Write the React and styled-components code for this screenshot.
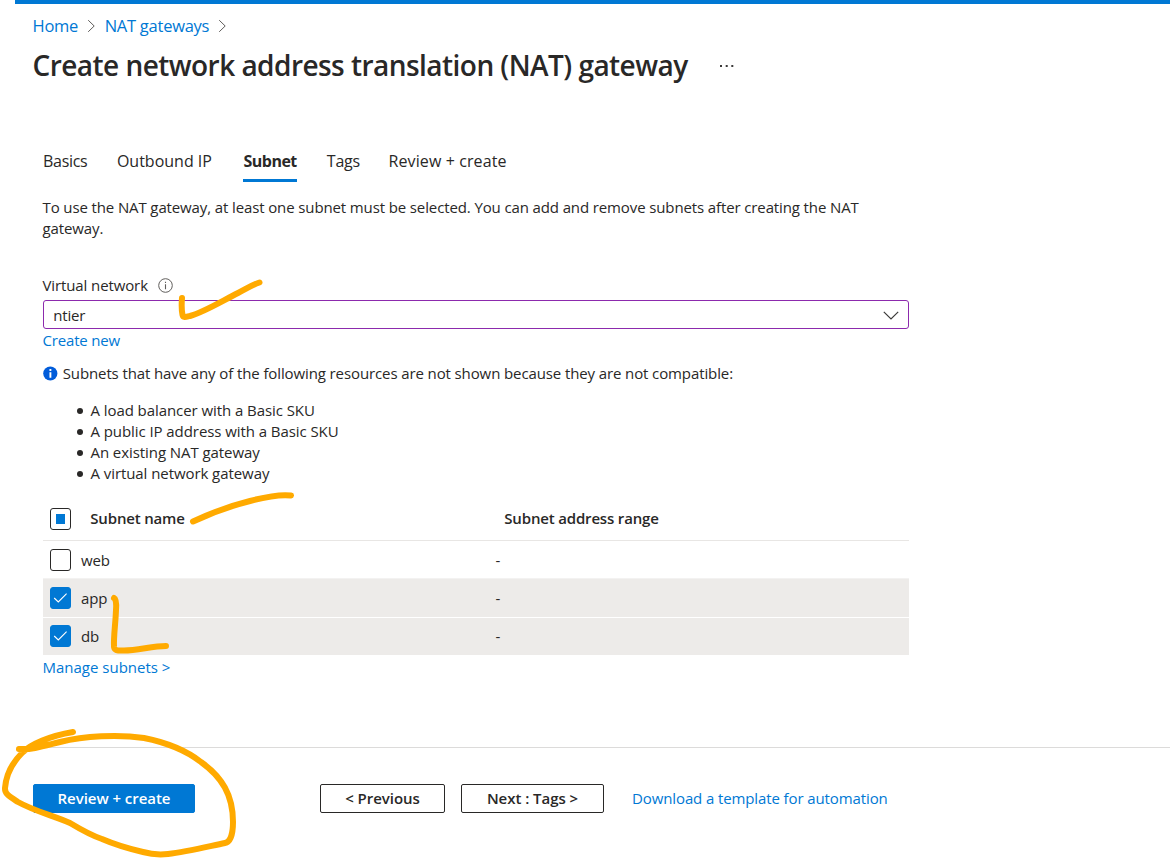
import React from "react";
import styled, { createGlobalStyle } from "styled-components";

const Global = createGlobalStyle`
  * { box-sizing: border-box; }
  body {
    margin: 0;
    background: #fff;
    color: #292827;
    font: 400 15px/21px "Open Sans", "Noto Sans", sans-serif;
    letter-spacing: -0.11px;
  }
`;

const Page = styled.div`
  position: relative;
  width: 1170px;
  height: 859px;
  overflow: hidden;
`;

const TopBar = styled.div`
  height: 4px;
  margin-left: 15px;
  background: #0078d4;
`;

const Header = styled.header`
  padding: 9px 0 0 32.5px;
`;

const Breadcrumb = styled.nav`
  display: flex;
  align-items: center;
  height: 24px;
  font-size: 16.5px;
  letter-spacing: -0.25px;
`;

const Link = styled.a`
  color: #0078d4;
  text-decoration: none;
  white-space: nowrap;
  letter-spacing: ${(p) => p.$spacing || "inherit"};
`;

const Separator = styled.svg`
  width: 9px;
  height: 14px;
  margin: 1px 8.5px 0 9px;
  fill: none;
  stroke: #605e5c;
`;

const TitleRow = styled.div`
  display: flex;
  align-items: center;
  height: 40px;
  margin-top: 8px;
`;

const Title = styled.h1`
  margin: 0;
  font-size: 28px;
  line-height: 40px;
  font-weight: 600;
  letter-spacing: -0.54px;
  white-space: nowrap;
`;

const MoreIcon = styled.svg`
  width: 14px;
  height: 4px;
  margin-left: 32px;
  margin-top: 1px;
  fill: #3b3a39;
`;

const Main = styled.main`
  width: 867px;
  margin: 65px 0 0 43px;
`;

const Tabs = styled.div`
  display: flex;
  height: 32px;
`;

const Tab = styled.div`
  height: 32px;
  margin-right: ${(p) => p.$after}px;
  border-bottom: 3px solid ${(p) => (p.$active ? "#0078d4" : "transparent")};
  font-size: 16px;
  line-height: 22px;
  font-weight: ${(p) => (p.$active ? 700 : 400)};
  letter-spacing: ${(p) => p.$spacing};
  white-space: nowrap;
`;

const Description = styled.p`
  margin: 15px 0 0 -0.5px;
  letter-spacing: -0.12px;
`;

const FieldLabel = styled.div`
  display: flex;
  align-items: center;
  gap: 10px;
  height: 21px;
  margin: 36px 0 0 -0.5px;
`;

const InfoIcon = styled.svg`
  width: 15px;
  height: 15px;
  flex: none;
`;

const Select = styled.div`
  display: flex;
  align-items: center;
  justify-content: space-between;
  width: 866px;
  height: 29px;
  margin-top: 4px;
  padding: 1px 9px 0 9.3px;
  border: 1px solid #8c2aad;
  border-radius: 3px;
  letter-spacing: -0.2px;
`;

const Chevron = styled.svg`
  width: 16px;
  height: 9px;
  fill: none;
  stroke: #3b3a39;
  stroke-width: 1.2;
`;

const LinkRow = styled.div`
  height: 21px;
  margin: ${(p) => p.$top}px 0 0 -0.5px;
`;

const Notice = styled.div`
  display: flex;
  align-items: center;
  gap: 5px;
  height: 21px;
  margin: 12px 0 0 -0.3px;
`;

const ResourceList = styled.ul`
  margin: 16px 0 0;
  padding: 0;
  list-style: none;
  letter-spacing: -0.07px;
`;

const Resource = styled.li`
  display: flex;
  align-items: center;
  padding-left: 34px;

  &::before {
    content: "";
    width: 6px;
    height: 6px;
    margin: 1px 7.5px 0 0;
    border-radius: 50%;
    background: #292827;
  }
`;

const Table = styled.div`
  width: 866px;
  margin-top: 13px;
`;

const HeadRow = styled.div`
  display: grid;
  grid-template-columns: 40.3px 414px 1fr;
  align-items: center;
  height: 44px;
  padding-left: 7px;
  border-bottom: 1px solid #e8e6e4;
  font-weight: 600;
  letter-spacing: -0.17px;
`;

const Row = styled.div`
  display: grid;
  grid-template-columns: 31px 414.5px 1fr;
  align-items: start;
  height: ${(p) => p.$height}px;
  padding: ${(p) => p.$top}px 0 0 7px;
  background: ${(p) => (p.$selected ? "#edebe9" : "#fff")};
  border-bottom: ${(p) => (p.$line ? `1px solid ${p.$line}` : "none")};
`;

const Cell = styled.span`
  padding-top: 1px;
`;

const Box = styled.span`
  display: flex;
  align-items: center;
  justify-content: center;
  width: 21px;
  height: 22px;
  border: 1px solid ${(p) => (p.$checked ? "#0078d4" : "#292827")};
  border-radius: 3px;
  background: ${(p) => (p.$checked ? "#0078d4" : "#fff")};
`;

const PartialMark = styled.span`
  width: 9px;
  height: 10px;
  background: #0078d4;
`;

const CheckMark = styled.svg`
  width: 15px;
  height: 12px;
  fill: none;
  stroke: #fff;
  stroke-width: 1.1;
`;

const Footer = styled.footer`
  display: flex;
  align-items: center;
  height: 102px;
  margin: 69px 0 0 33px;
  border-top: 1px solid #dcdbda;
`;

const Button = styled.button`
  width: ${(p) => p.$width}px;
  height: 29px;
  margin: 0 ${(p) => p.$after}px 0 0;
  padding: 0;
  border: 1px solid ${(p) => (p.$primary ? "#0078d4" : "#292827")};
  border-radius: 2px;
  background: ${(p) => (p.$primary ? "#0078d4" : "#fff")};
  color: ${(p) => (p.$primary ? "#fff" : "#292827")};
  font: inherit;
  font-weight: 600;
  letter-spacing: -0.04px;
`;

const Ink = styled.svg`
  position: absolute;
  inset: 0;
  width: 1170px;
  height: 859px;
  pointer-events: none;
  fill: none;
  stroke: #ffaa00;
  stroke-width: 6;
  stroke-linecap: round;
  stroke-linejoin: round;
`;

const Crumb = () => (
  <Separator viewBox="0 0 9 14">
    <path d="M1.200 1.200 7.200 7 1.200 12.800" />
  </Separator>
);

const Check = () => (
  <Box $checked>
    <CheckMark viewBox="0 0 15 12">
      <path d="M1.2 6 5.3 10 13.6 1.7" />
    </CheckMark>
  </Box>
);

const tabs = [
  { label: "Basics", spacing: "-0.3px", after: 29.5 },
  { label: "Outbound IP", spacing: "0px", after: 31.5 },
  { label: "Subnet", spacing: "-0.5px", after: 30, active: true },
  { label: "Tags", spacing: "-0.2px", after: 28.5 },
  { label: "Review + create", spacing: "0.1px", after: 0 },
];

const resources = [
  "A load balancer with a Basic SKU",
  "A public IP address with a Basic SKU",
  "An existing NAT gateway",
  "A virtual network gateway",
];

const subnets = [
  { name: "web", height: 38, top: 8, line: "#f3f2f1" },
  { name: "app", height: 39, top: 8, line: "#fff", selected: true },
  { name: "db", height: 37, top: 7, selected: true },
];

export default function App() {
  return (
    <Page>
      <Global />
      <TopBar />
      <Header>
        <Breadcrumb>
          <Link>Home</Link>
          <Crumb />
          <Link>NAT gateways</Link>
          <Crumb />
        </Breadcrumb>
        <TitleRow>
          <Title>Create network address translation (NAT) gateway</Title>
          <MoreIcon viewBox="0 0 14 4">
            <rect x="0" y="1" width="2" height="2" />
            <rect x="5.7" y="1" width="2" height="2" />
            <rect x="11.3" y="1" width="2" height="2" />
          </MoreIcon>
        </TitleRow>
      </Header>
      <Main>
        <Tabs>
          {tabs.map((t) => (
            <Tab key={t.label} $active={t.active} $spacing={t.spacing} $after={t.after}>
              {t.label}
            </Tab>
          ))}
        </Tabs>
        <Description>
          To use the NAT gateway, at least one subnet must be selected. You can add and remove
          subnets after creating the NAT gateway.
        </Description>
        <FieldLabel>
          Virtual network
          <InfoIcon viewBox="0 0 15 15">
            <circle cx="7.5" cy="7.5" r="6.8" fill="none" stroke="#605e5c" />
            <path d="M7.5 6.3v4.9M7.5 3.8v1.3" stroke="#605e5c" strokeWidth="1.1" />
          </InfoIcon>
        </FieldLabel>
        <Select>
          ntier
          <Chevron viewBox="0 0 16 9">
            <path d="M.8.8 8 8 15.2.8" />
          </Chevron>
        </Select>
        <LinkRow $top={1}>
          <Link $spacing="-0.17px">Create new</Link>
        </LinkRow>
        <Notice>
          <InfoIcon viewBox="0 0 15 15">
            <circle cx="7.3" cy="7.5" r="7.1" fill="#015cda" />
            <path d="M7.4 6.3v5.5M7.4 3v2" stroke="#fff" strokeWidth="1.9" />
          </InfoIcon>
          Subnets that have any of the following resources are not shown because they are not
          compatible:
        </Notice>
        <ResourceList>
          {resources.map((r) => (
            <Resource key={r}>{r}</Resource>
          ))}
        </ResourceList>
        <Table>
          <HeadRow>
            <Box>
              <PartialMark />
            </Box>
            <span>Subnet name</span>
            <span>Subnet address range</span>
          </HeadRow>
          {subnets.map((s) => (
            <Row
              key={s.name}
              $height={s.height}
              $top={s.top}
              $line={s.line}
              $selected={s.selected}
            >
              {s.selected ? <Check /> : <Box />}
              <Cell>{s.name}</Cell>
              <Cell>-</Cell>
            </Row>
          ))}
        </Table>
        <LinkRow $top={2}>
          <Link $spacing="0px">Manage subnets &gt;</Link>
        </LinkRow>
      </Main>
      <Footer>
        <Button $primary $width={162} $after={125}>
          Review + create
        </Button>
        <Button $width={125} $after={16}>
          &lt; Previous
        </Button>
        <Button $width={143} $after={28}>
          Next : Tags &gt;
        </Button>
        <Link>Download a template for automation</Link>
      </Footer>
      <Ink viewBox="0 0 1170 859">
        <path d="M182 298C181.5 304 181.5 310 182.500 315C183 318 186 317 190 316C204 312 222 301 238 293C246 289 252 285 259.500 282.500" />
        <path d="M193 521.500C211 513 230 506 250 501C265 497 279 494 291 495.500" />
        <path d="M114 598C116 599 116.500 604 116 610C115.500 624 113.500 636 114 647C114.500 651 118 650.500 124 650.500C138 650.500 152 646 166 646" />
        <path d="M73 732C50 736 31 744 22 753C12 763 6 776 5 788C4.500 794 10 797 18 802C34 811 54 816 70 823C80 829 90 835 102 839C116 845 130 849 143 852C150 854 158 855 168 854C186 852 206 847 225 843C231 842 233 832 233 822C233 795 222 777 201 762C183 748 164 742 144 738C118 734 84 736 60 742C44 746 32 750 19 749" />
      </Ink>
    </Page>
  );
}
